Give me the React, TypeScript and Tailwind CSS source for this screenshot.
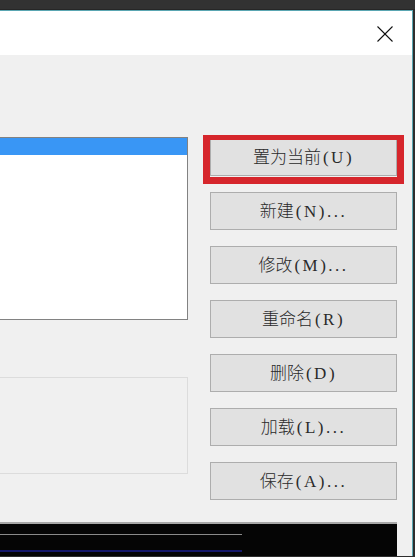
import React from "react";

const cjk = { fontFamily: '"Noto Sans CJK SC", sans-serif' };
const latin = { fontFamily: '"Liberation Serif", serif' };

function Btn({ zh, en, highlight }: { zh: string; en: string; highlight?: boolean }) {
  return (
    <div className="relative">
      {highlight && (
        <div className="pointer-events-none absolute -left-[7px] -right-[7px] -top-[3px] -bottom-[8px] border-x-[7px] border-t-[5px] border-b-[7px] border-[#d6262c]" />
      )}
      <div className="flex h-[38px] w-[187px] items-center justify-center border border-[#adadad] bg-[#e1e1e1] text-[#2a2a2a]">
        <span className="whitespace-nowrap leading-[20px]">
          <span className="text-[17px] font-light" style={cjk}>
            {zh}
          </span>
          <span className="pl-[2px] text-[17px] tracking-[2.5px]" style={latin}>
            {en}
          </span>
        </span>
      </div>
    </div>
  );
}

export default function App() {
  const buttons: [string, string][] = [
    ["置为当前", "(U)"],
    ["新建", "(N)..."],
    ["修改", "(M)..."],
    ["重命名", "(R)"],
    ["删除", "(D)"],
    ["加载", "(L)..."],
    ["保存", "(A)..."],
  ];
  return (
    <div className="h-[557px] w-[415px] overflow-hidden bg-[#2e2e2e]">
      <div className="h-[10px] border-b border-[#262626] bg-[#323232]" />
      <div className="flex h-[546px] w-[413px] flex-col border-r border-t border-[#5aa6b2] bg-[#f0f0f0]">
        {/* title bar */}
        <div className="flex h-[44px] items-center justify-end bg-white pr-[19px]">
          <svg width="16" height="16" viewBox="0 0 16 16" className="mt-[1px]">
            <line x1="0.5" y1="0.5" x2="15.5" y2="15.5" stroke="#111" strokeWidth="1.1" />
            <line x1="15.5" y1="0.5" x2="0.5" y2="15.5" stroke="#111" strokeWidth="1.1" />
          </svg>
        </div>
        {/* body */}
        <div className="flex flex-row gap-[22px] pt-[82px]">
          <div className="flex w-[188px] flex-col">
            <div className="h-[183px] w-[188px] border-y border-r border-[#828282] bg-white">
              <div className="h-[17px] w-full bg-[#3996f5]" />
            </div>
            <div className="mt-[57px] h-[97px] w-[188px] border-y border-r border-[#dcdcdc] bg-[#f0f0f0]" />
          </div>
          <div className="mt-[1px] flex flex-col gap-[16px]">
            {buttons.map(([zh, en], i) => (
              <Btn key={zh} zh={zh} en={en} highlight={i === 0} />
            ))}
          </div>
        </div>
        <div className="mt-[22px] flex w-[397px] flex-1 flex-col border-t-2 border-[#a8a8a8] bg-[#050505]">
          <div className="mt-[10px] h-px w-[242px] bg-[#8a8a8a]" />
          <div className="mt-[15px] h-[2px] w-[242px] bg-[#15186a]" />
        </div>
      </div>
    </div>
  );
}
